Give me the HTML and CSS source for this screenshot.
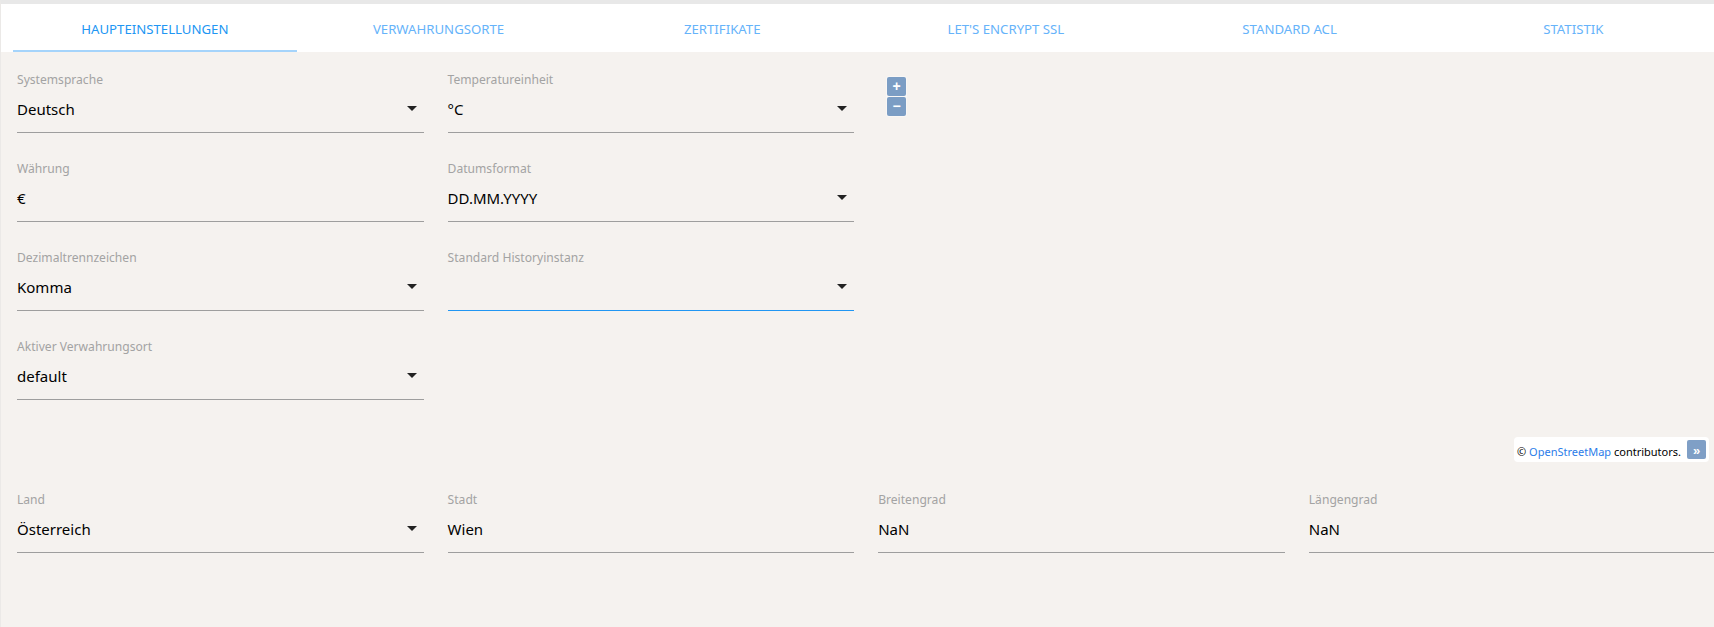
FILE: index.html
```html
<!DOCTYPE html>
<html lang="de">
<head>
<meta charset="utf-8">
<title>Haupteinstellungen</title>
<link rel="stylesheet" href="styles.css">
</head>
<body>
<div class="page">
  <nav class="tabs">
    <a class="tab active">HAUPTEINSTELLUNGEN</a>
    <a class="tab">VERWAHRUNGSORTE</a>
    <a class="tab">ZERTIFIKATE</a>
    <a class="tab">LET'S ENCRYPT SSL</a>
    <a class="tab">STANDARD ACL</a>
    <a class="tab">STATISTIK</a>
  </nav>
  <main class="content">
    <section class="top">
      <div class="fields">
        <div class="field select"><label>Systemsprache</label><div class="value">Deutsch</div></div>
        <div class="field select"><label>Temperatureinheit</label><div class="value">°C</div></div>
        <div class="field"><label>Währung</label><div class="value">€</div></div>
        <div class="field select"><label>Datumsformat</label><div class="value">DD.MM.YYYY</div></div>
        <div class="field select"><label>Dezimaltrennzeichen</label><div class="value">Komma</div></div>
        <div class="field select focused"><label>Standard Historyinstanz</label><div class="value"></div></div>
        <div class="field select"><label>Aktiver Verwahrungsort</label><div class="value">default</div></div>
      </div>
      <div class="map">
        <div class="zoom">
          <button class="zoom-btn">+</button>
          <button class="zoom-btn">−</button>
        </div>
        <div class="attribution"><span class="attr-text">© <a>OpenStreetMap</a> contributors.</span><span class="attr-btn">»</span></div>
      </div>
    </section>
    <section class="location">
      <div class="field select"><label>Land</label><div class="value">Österreich</div></div>
      <div class="field"><label>Stadt</label><div class="value">Wien</div></div>
      <div class="field"><label>Breitengrad</label><div class="value">NaN</div></div>
      <div class="field"><label>Längengrad</label><div class="value">NaN</div></div>
    </section>
  </main>
</div>
</body>
</html>
```
FILE: styles.css
```css
* { box-sizing: border-box; }
html, body { margin: 0; height: 100%; overflow: hidden; }
body {
  background: #f5f2ef;
  font-family: "Noto Sans", "Open Sans", sans-serif;
}
.page {
  height: 627px;
  width: 1714px;
  border-top: 4px solid #e8e8e8;
  border-left: 1px solid #ebe9e7;
  overflow: hidden;
}
.tabs {
  display: flex;
  height: 48px;
  width: 1713px;
  padding-left: 12px;
  background: #fff;
}
.tab {
  flex: 0 0 283.7px;
  display: flex;
  align-items: center;
  justify-content: center;
  height: 48px;
  padding-top: 4px;
  font-size: 13.2px;
  color: #66b3fa;
  border-bottom: 2px solid transparent;
}
.tab.active { color: #2196f3; border-bottom-color: #a5d4fb; }
.content { padding-left: 16px; }
.top { display: flex; height: 412px; }
.fields {
  display: grid;
  grid-template-columns: 406.6px 406.6px;
  grid-auto-rows: 89px;
  column-gap: 24px;
  padding-top: 12px;
  width: 854px;
  flex: none;
}
.map { position: relative; flex: 1; }
.field { position: relative; height: 69px; border-bottom: 1px solid #9e9e9e; }
.field label {
  display: block;
  font-size: 12.1px;
  line-height: 16px;
  padding-top: 8px;
  height: 24px;
  color: #a3a3a3;
}
.value {
  font-size: 15px;
  line-height: 22px;
  height: 22px;
  margin-top: 10px;
  color: #000;
}
.select::after {
  content: "";
  position: absolute;
  right: 7px;
  top: 42px;
  border-left: 5px solid transparent;
  border-right: 5px solid transparent;
  border-top: 5px solid #222;
}
.focused { border-bottom-color: #2196f3; }
.zoom {
  position: absolute;
  left: 15px;
  top: 24px;
  width: 21px;
  display: flex;
  flex-direction: column;
  gap: 1px;
  padding: 1px;
  background: rgba(255,255,255,.4);
  border-radius: 3px;
}
.zoom-btn {
  width: 19px;
  height: 19px;
  padding: 0;
  border: 0;
  border-radius: 2px;
  background: #7b9dc4;
  color: #fff;
  font: 700 14px/19px "Liberation Sans", sans-serif;
}
.attribution {
  position: absolute;
  right: 5px;
  top: 385px;
  height: 25px;
  display: flex;
  align-items: center;
  padding: 0 3px;
  background: #fff;
  border-radius: 4px;
  font-size: 11px;
  color: #000;
  white-space: pre;
}
.attr-text { padding-top: 4px; }
.attribution a { color: #2b7ce9; }
.attr-btn {
  width: 19px;
  height: 19px;
  margin-left: 6px;
  border-radius: 2px;
  background: #7f9fc6;
  color: #fff;
  font: bold 13px/22px "Liberation Sans", sans-serif;
  text-align: center;
}
.location {
  display: grid;
  grid-template-columns: repeat(4, 406.6px);
  column-gap: 24px;
  padding-top: 20px;
}
```
